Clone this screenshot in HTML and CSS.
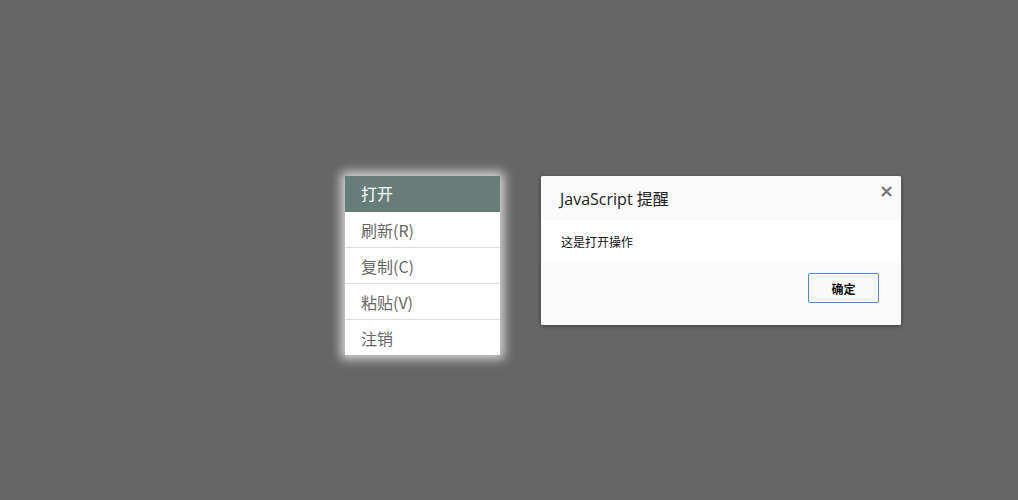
FILE: index.html
```html
<!DOCTYPE html>
<html lang="zh-CN">
<head>
<meta charset="utf-8">
<title>Context menu</title>
<link rel="stylesheet" href="styles.css">
</head>
<body>
<div class="stage">
  <ul class="menu">
    <li class="menu-item active">打开</li>
    <li class="menu-item">刷新(R)</li>
    <li class="menu-item">复制(C)</li>
    <li class="menu-item">粘贴(V)</li>
    <li class="menu-item">注销</li>
  </ul>
  <div class="dialog">
    <div class="dialog-head">
      <span class="dialog-title">JavaScript 提醒</span>
      <span class="dialog-close">×</span>
    </div>
    <div class="dialog-body">这是打开操作</div>
    <div class="dialog-foot">
      <button class="btn">确定</button>
    </div>
  </div>
</div>
</body>
</html>
```

FILE: styles.css
```css
html, body {
  margin: 0;
  padding: 0;
}
body {
  background: #666666;
  width: 1018px;
  height: 500px;
  overflow: hidden;
  font-family: "Open Sans", "Noto Sans CJK SC", sans-serif;
}
.stage {
  display: flex;
  align-items: flex-start;
  gap: 41px;
  padding: 176px 0 0 345px;
}
.menu {
  list-style: none;
  margin: 0;
  padding: 0;
  width: 155px;
  background: #fff;
  box-shadow: 0 0 10px 4px rgba(255, 255, 255, 0.75);
}
.menu-item {
  height: 35px;
  line-height: 36px;
  padding-left: 16px;
  font-size: 16px;
  color: #666;
  border-bottom: 1px solid #dddddd;
  font-family: "Noto Sans CJK SC", sans-serif;
}
.menu-item:last-child {
  border-bottom: 0;
}
.menu-item.active {
  height: 36px;
  line-height: 35px;
  background: #667d78;
  color: #fff;
  border-bottom: 0;
}
.dialog {
  width: 360px;
  background: #fafafa;
  border-radius: 2px;
  box-shadow: 0 1px 4px rgba(0, 0, 0, 0.4);
  overflow: hidden;
}
.dialog-head {
  height: 44px;
  display: flex;
  align-items: center;
  justify-content: space-between;
  padding: 0 7px 0 19px;
  background: #fafafa;
}
.dialog-title {
  font-size: 16px;
  color: #222;
  font-family: "Open Sans", "Noto Sans CJK SC", sans-serif;
}
.dialog-close {
  align-self: flex-start;
  margin-top: 4px;
  font-size: 18px;
  font-weight: bold;
  color: #777;
  font-family: "DejaVu Sans", sans-serif;
}
.dialog-body {
  background: #fff;
  height: 43px;
  line-height: 43px;
  padding-left: 20px;
  font-size: 12px;
  color: #111;
  font-family: "Noto Sans CJK SC", sans-serif;
}
.dialog-foot {
  height: 62px;
  display: flex;
  justify-content: flex-end;
  align-items: flex-start;
  padding: 10px 22px 0 0;
  box-sizing: border-box;
  background: #fafafa;
}
.btn {
  width: 71px;
  height: 30px;
  border: 1px solid #4d8bf0;
  border-radius: 2px;
  background: #f9f9f9;
  font-size: 12px;
  font-weight: bold;
  color: #111;
  font-family: "Noto Sans CJK SC", sans-serif;
  padding: 0;
}
```
